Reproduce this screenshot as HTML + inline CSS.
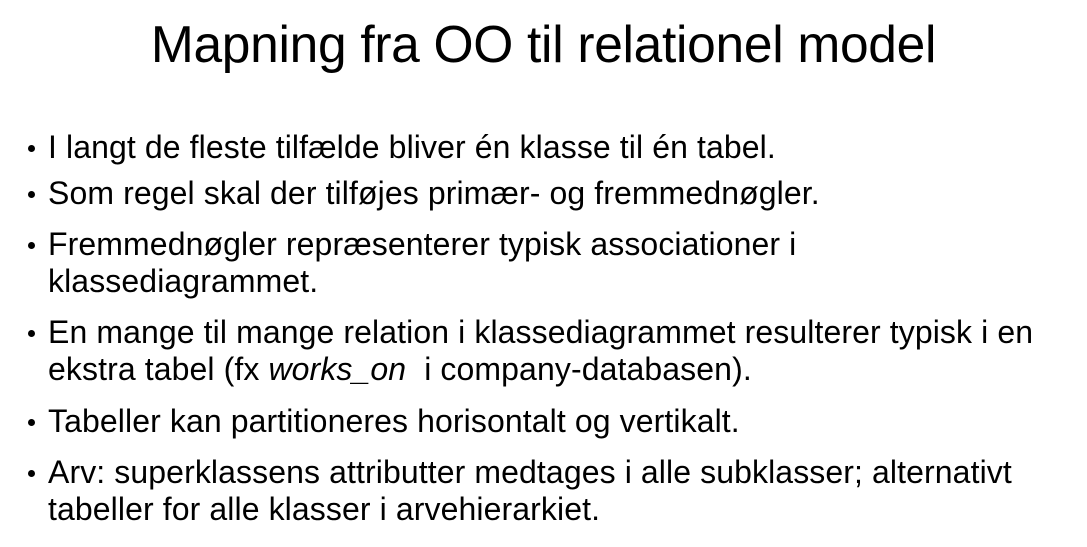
<!DOCTYPE html>
<html><head><meta charset="utf-8"><style>
body{margin:0;width:1087px;height:547px;background:#fff;overflow:hidden;position:relative;font-family:"Liberation Sans",sans-serif;color:#000}
.t{position:absolute;left:0;width:1087px;text-align:center;top:14px;font-size:51.5px;line-height:60px;letter-spacing:-0.3px}
.l{position:absolute;left:48px;font-size:32px;white-space:nowrap;line-height:30px;letter-spacing:0.1px}
.b{position:absolute;left:28px;width:7px;height:7px;border-radius:50%;background:#000}
</style></head><body>
<div class="t">Mapning fra OO til relationel model</div>
<div class="b" style="top:145px"></div><div class="l" style="top:132px">I langt de fleste tilfælde bliver én klasse til én tabel.</div>
<div class="b" style="top:191px"></div><div class="l" style="top:178px">Som regel skal der tilføjes primær- og fremmednøgler.</div>
<div class="b" style="top:242px"></div><div class="l" style="top:229px">Fremmednøgler repræsenterer typisk associationer i</div>
<div class="l" style="top:266px">klassediagrammet.</div>
<div class="b" style="top:330px"></div><div class="l" style="top:317px">En mange til mange relation i klassediagrammet resulterer typisk i en</div>
<div class="l" style="top:354px">ekstra tabel (fx <i>works_on</i>&nbsp; i company-databasen).</div>
<div class="b" style="top:419px"></div><div class="l" style="top:406px">Tabeller kan partitioneres horisontalt og vertikalt.</div>
<div class="b" style="top:470px"></div><div class="l" style="top:457px">Arv: superklassens attributter medtages i alle subklasser; alternativt</div>
<div class="l" style="top:494px">tabeller for alle klasser i arvehierarkiet.</div>
</body></html>
